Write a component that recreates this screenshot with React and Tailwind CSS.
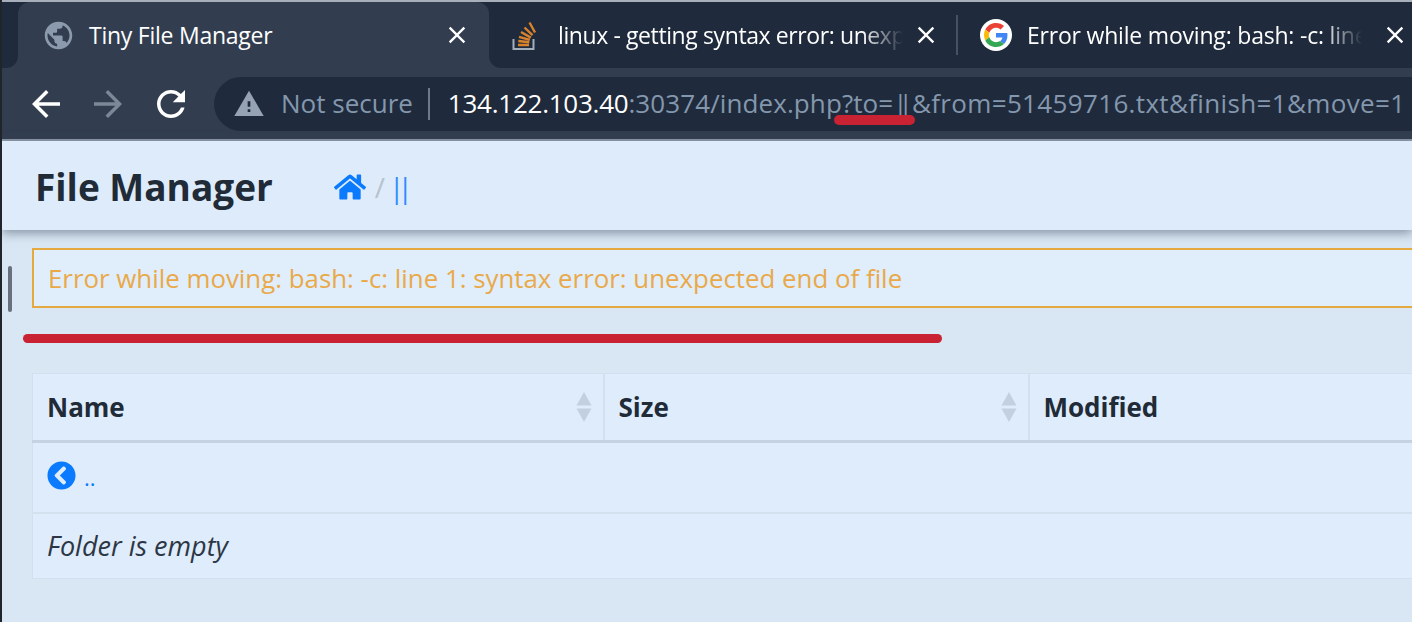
import React from 'react'
import { FaHome, FaChevronCircleLeft } from 'react-icons/fa'

const font = "font-['Open_Sans','Noto_Sans',sans-serif]"

const Mat = ({ d, className }) => (
  <svg viewBox="0 0 24 24" fill="currentColor" className={className}>
    <path d={d} />
  </svg>
)

const CLOSE = 'M19 6.41L17.59 5 12 10.59 6.41 5 5 6.41 10.59 12 5 17.59 6.41 19 12 13.41 17.59 19 19 17.59 13.41 12 19 6.41z'
const ARROW = 'M20 11H7.83l5.59-5.59L12 4l-8 8 8 8 1.41-1.41L7.83 13H20v-2z'
const RELOAD = 'M17.65 6.35C16.2 4.9 14.21 4 12 4c-4.42 0-7.99 3.58-7.99 8s3.57 8 7.99 8c3.73 0 6.84-2.55 7.73-6h-2.08c-.82 2.33-3.04 4-5.65 4-3.31 0-6-2.69-6-6s2.69-6 6-6c1.66 0 3.14.69 4.22 1.78L13 11h7V4l-2.35 2.35z'
const WARN = 'M1 21h22L12 2 1 21zm12-3h-2v-2h2v2zm0-4h-2v-4h2v4z'
const GLOBE = 'M12 2C6.48 2 2 6.48 2 12s4.48 10 10 10 10-4.48 10-10S17.52 2 12 2zm-1 17.93c-3.95-.49-7-3.85-7-7.93 0-.62.08-1.21.21-1.79L9 15v1c0 1.1.9 2 2 2v1.93zm6.9-2.54c-.26-.81-1-1.39-1.9-1.39h-1v-3c0-.55-.45-1-1-1H8v-2h2c.55 0 1-.45 1-1V7h2c1.1 0 2-.9 2-2v-.41c2.93 1.19 5 4.06 5 7.41 0 2.08-.8 3.97-2.1 5.39z'

const StackIcon = () => (
  <svg viewBox="0 0 26 32" fill="none" className="h-8 w-[26px] shrink-0">
    <path d="M1.5 20v10h20V20" stroke="#a3aebb" strokeWidth="2" />
    <path
      d="M6 26h11M6.3 22l11 1.2M7 17.8l10.8 3M9 13l9.8 5.6M12.5 8.5l8 7.6M17.5 3.5l5.5 10"
      stroke="#d9822b"
      strokeWidth="2.4"
    />
  </svg>
)

const GoogleIcon = () => (
  <span className="flex h-8 w-8 shrink-0 items-center justify-center rounded-full bg-white">
    <svg viewBox="0 0 48 48" className="h-6 w-6">
      <path fill="#EA4335" d="M24 9.5c3.5 0 6.7 1.2 9.2 3.6l6.9-6.9C35.9 2.4 30.5 0 24 0 14.6 0 6.5 5.4 2.6 13.2l8 6.2C12.5 13.7 17.8 9.5 24 9.5z" />
      <path fill="#4285F4" d="M46.9 24.5c0-1.6-.1-3.1-.4-4.5H24v9h12.9c-.6 3-2.2 5.5-4.7 7.2l7.7 6c4.5-4.2 7-10.3 7-17.7z" />
      <path fill="#FBBC05" d="M10.5 28.6c-.5-1.4-.8-3-.8-4.6s.3-3.2.8-4.6l-8-6.2C.9 16.5 0 20.1 0 24s.9 7.5 2.6 10.8l7.9-6.2z" />
      <path fill="#34A853" d="M24 48c6.5 0 11.9-2.1 15.9-5.8l-7.7-6c-2.2 1.5-4.9 2.3-8.2 2.3-6.2 0-11.5-4.2-13.4-9.9l-8 6.2C6.5 42.6 14.6 48 24 48z" />
    </svg>
  </span>
)

const SortArrows = () => (
  <svg viewBox="0 0 16 30" className="h-[30px] w-4 text-[#c3d0df]" fill="currentColor">
    <path d="M8 0l7.5 13.5h-15z" />
    <path d="M8 30l7.5-13.5h-15z" />
  </svg>
)

const HeadCell = ({ label }) => (
  <th className="h-[68px] border-r-2 border-[#d3e0ee] pl-[14px] pr-[11px] text-left text-[26px] font-bold text-[#212b38]">
    <div className="flex items-center justify-between">
      <span>{label}</span>
      <SortArrows />
    </div>
  </th>
)

export default function App() {
  return (
    <div className={`relative h-[622px] w-[1412px] overflow-hidden border-l-2 border-[#20242b] bg-[#d9e6f3] ${font}`}>
      {/* browser chrome */}
      <div className="h-[2px] bg-[#a7afbb]" />
      <div className="flex h-[66px] bg-[#323e50] text-white">
        <div className="w-4 shrink-0 rounded-br-xl bg-[#1f2b3c]" />
        <div className="shrink-0 bg-[#1f2b3c]">
          <div className="flex h-full w-[471px] items-center rounded-t-xl bg-[#323e50] pl-[24px] pr-[18px]">
            <Mat d={GLOBE} className="h-[33px] w-[33px] text-[#8b9aad]" />
            <span className="ml-[14px] flex-1 text-[23px] tracking-[-0.25px]">Tiny File Manager</span>
            <Mat d={CLOSE} className="h-7 w-7" />
          </div>
        </div>
        <div className="flex min-w-0 flex-1 items-center rounded-bl-xl bg-[#1f2b3c]">
          <div className="flex w-[467px] shrink-0 items-center pl-[23px] pr-[16px]">
            <StackIcon />
            <span className="ml-[20px] min-w-0 flex-1 overflow-hidden whitespace-nowrap text-[23px] tracking-[-0.4px] [mask-image:linear-gradient(to_right,black_88%,transparent)]">
              linux - getting syntax error: unexpected end of file
            </span>
            <Mat d={CLOSE} className="ml-[9px] h-7 w-7 shrink-0" />
          </div>
          <div className="h-10 w-[2px] shrink-0 bg-[#465264]" />
          <div className="flex min-w-0 flex-1 items-center pl-[22px] pr-[3px]">
            <GoogleIcon />
            <span className="ml-[15px] min-w-0 flex-1 overflow-hidden whitespace-nowrap text-[23px] tracking-[-0.2px] [mask-image:linear-gradient(to_right,black_88%,transparent)]">
              Error while moving: bash: -c: line 1: syntax error
            </span>
            <Mat d={CLOSE} className="ml-[19px] h-7 w-7 shrink-0" />
          </div>
        </div>
      </div>
      <div className="flex h-[73px] items-center border-b-2 border-[#8e9aa9] bg-[#323e50] pl-[23px]">
        <Mat d={ARROW} className="h-[42px] w-[42px] text-white" />
        <Mat d={ARROW} className="ml-[20px] h-[42px] w-[42px] rotate-180 text-[#7c8797]" />
        <Mat d={RELOAD} className="ml-[21px] h-[42px] w-[42px] text-white" />
        <div className="ml-[22px] flex h-[54px] flex-1 items-center rounded-l-[27px] bg-[#1f2b3c] pl-[19px] text-[26px]">
          <Mat d={WARN} className="h-8 w-8 shrink-0 text-[#95a3b4]" />
          <span className="ml-[16px] text-[#8497ad]">Not secure</span>
          <div className="ml-[15px] h-8 w-[2px] bg-[#6d7a8b]" />
          <span className="ml-[18px] whitespace-nowrap tracking-[-0.25px] text-white">
            134.122.103.40
            <span className="tracking-[0.1px] text-[#8497ad]">
              :30374/index.php?to=
              <span className="tracking-[-9px]">||</span>
              <span className="ml-[8px] tracking-[0.35px]">&amp;from=51459716.txt&amp;finish=1&amp;move=1</span>
            </span>
          </span>
        </div>
      </div>

      {/* page */}
      <nav className="flex h-[89px] items-center bg-[#deebfa] pl-[33px] pt-[2px] shadow-[0_3px_10px_rgba(60,75,95,0.55)]">
        <h1 className="text-[37px] font-bold text-[#212b38]">File Manager</h1>
        <div className="ml-[61px] flex items-center text-[28px]">
          <FaHome className="h-8 w-8 text-[#0a7bff]" />
          <span className="ml-[9px] text-[#b7c2cd]">/</span>
          <span className="ml-[4px] tracking-[-7px] text-[#2f8cff]">||</span>
        </div>
      </nav>

      <main className="pl-[30px]">
        <div className="mt-[18px] flex h-[60px] w-[1500px] items-center border-2 border-[#e6a93f] bg-[#e0edfb] pl-[14px] text-[25.85px] text-[#e9a949]">
          Error while moving: bash: -c: line 1: syntax error: unexpected end of file
        </div>
        <div className="-ml-[9px] mt-[26px] h-[9px] w-[919px] rounded-full bg-[#c92233]" />

        <table className="mt-[30px] w-[1500px] table-fixed border border-[#d3e0ee] bg-[#deecfb]">
          <colgroup>
            <col className="w-[571px]" />
            <col className="w-[425px]" />
            <col />
          </colgroup>
          <thead className="border-b-[3px] border-[#c4d2e1]">
            <tr>
              <HeadCell label="Name" />
              <HeadCell label="Size" />
              <th className="px-[14px] text-left text-[26px] font-bold text-[#212b38]">Modified</th>
            </tr>
          </thead>
          <tbody>
            <tr className="border-b-2 border-[#d3e0ee]">
              <td colSpan={3} className="h-[71px] px-[14px] pb-[3px]">
                <div className="flex items-center gap-2 text-[#0a7bff]">
                  <FaChevronCircleLeft className="h-[29px] w-[29px]" />
                  <span className="mt-1 text-[22px]">..</span>
                </div>
              </td>
            </tr>
            <tr>
              <td colSpan={3} className="h-[66px] px-[14px] text-[27px] italic text-[#2d3644]">
                Folder is empty
              </td>
            </tr>
          </tbody>
        </table>
      </main>

      {/* overlays: annotation and page handle */}
      <div className="absolute left-[832px] top-[115px] h-[10px] w-[81px] rounded-full bg-[#c92233]" />
      <div className="absolute left-[6px] top-[266px] h-[46px] w-1 rounded-full bg-[#66707e]" />
    </div>
  )
}
